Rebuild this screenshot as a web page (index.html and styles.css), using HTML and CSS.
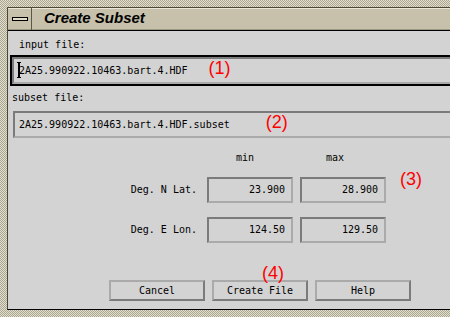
FILE: index.html
```html
<!DOCTYPE html>
<html lang="en">
<head>
  <meta charset="UTF-8">
  <title>Create Subset</title>
  <link rel="stylesheet" href="styles.css">
</head>
<body>
  <div class="window">
    <div class="frame">
      <!-- ===== Title bar ===== -->
      <div class="titlebar">
        <div class="menu-btn"><span class="bar"></span></div>
        <div class="title">Create Subset</div>
      </div>

      <div class="content">
        <div class="label label-input">input file:</div>
        <div class="focus-ring">
          <div class="field input"><svg class="caret" width="4" height="16" viewBox="0 0 4 16">
              <path d="M0 0.5H4M0 15.5H4" stroke="#000" stroke-width="1"/>
              <rect x="1" y="0" width="2" height="16" fill="#000"/>
            </svg>2A25.990922.10463.bart.4.HDF<span class="note note-1">(1)</span></div>
        </div>

        <div class="label label-subset">subset file:</div>
        <div class="field subset">2A25.990922.10463.bart.4.HDF.subset<span class="note note-2">(2)</span></div>

        <div class="range">
          <div></div>
          <div class="head head-min">min</div>
          <div class="head head-max">max</div>

          <div class="row-label">Deg. N Lat.</div>
          <div class="num">23.900</div>
          <div class="num">28.900</div>

          <div class="row-label">Deg. E Lon.</div>
          <div class="num">124.50</div>
          <div class="num">129.50</div>
        </div>

        <div class="buttons">
          <div class="btn">Cancel</div>
          <div class="btn">Create File</div>
          <div class="btn">Help</div>
        </div>

        <!-- annotations drawn over the dialog -->
        <div class="note note-3">(3)</div>
        <div class="note note-4">(4)</div>
      </div>
    </div>
  </div>
</body>
</html>
```

FILE: styles.css
```css
body {
  margin: 0;
  background-color: #d3d3d3;
  font-family: "DejaVu Sans Mono", monospace;
  font-size: 10px;
  color: #000;
}
.window {
  width: 450px;
  height: 317px;
  box-sizing: border-box;
  padding: 7px 0 7px 7px;
  background: repeating-conic-gradient(#e2ded0 0 25%, #aba690 0 50%) 0 0 / 2px 2px;
  overflow: hidden;
}
.frame {
  box-sizing: border-box;
  height: 303px;
  border-left: 1px solid #4b4838;
  border-top: 1px solid #4b4838;
  border-bottom: 1px solid #000;
  background-color: #d3d3d3;
}
.titlebar {
  display: flex;
  height: 22px;
  background-color: #c7c1ab;
  border-bottom: 1px solid #000;
  box-shadow: inset 0 1px #ebe7d8, inset 0 -1px #9c977f;
}
.menu-btn {
  width: 23px;
  border-right: 1px solid #5a5748;
  display: flex;
  align-items: center;
  justify-content: center;
}
.bar {
  width: 14px;
  height: 2px;
  border: 1px solid #000;
  background-color: #e2ddc9;
}
.title {
  padding-left: 12px;
  font: italic bold 15px "Liberation Sans", sans-serif;
  line-height: 20px;
}
.content {
  position: relative;
  height: 278px;
}
.label {
  line-height: 13px;
  color: #000;
}
.label-input {
  margin: 7px 0 0 11px;
}
.label-subset {
  margin: 5px 0 0 4px;
}
.focus-ring {
  margin: 4px -20px 0 2px;
  border: 2px solid #000;
}
.field {
  white-space: nowrap;
  line-height: 23px;
  height: 23px;
  border: 2px solid;
  border-color: #7b7b7b #aaa #aaa #7b7b7b;
}
.input {
  padding-left: 3px;
}
.caret {
  vertical-align: top;
  margin: 3px -2px 0 0;
}
.subset {
  margin: 7px -20px 0 5px;
  padding-left: 4px;
}
.note {
  font-family: "Liberation Sans", sans-serif;
  font-size: 18px;
  line-height: 0;
  color: #f00;
}
.note-1 {
  margin-left: 21px;
}
.note-2 {
  margin-left: 36px;
}
.note-3,
.note-4 {
  position: absolute;
  line-height: 18px;
}
.note-3 {
  left: 392px;
  top: 132px;
}
.note-4 {
  left: 254px;
  top: 226px;
}
.range {
  display: grid;
  grid-template-columns: 192px 86px 86px;
  column-gap: 7px;
  row-gap: 14px;
  margin-top: 15px;
}
.head {
  line-height: 10px;
  height: 10px;
  color: #000;
}
.head-min {
  padding-left: 29px;
}
.head-max {
  padding-left: 26px;
}
.row-label {
  text-align: right;
  padding-right: 3px;
  line-height: 26px;
}
.num {
  height: 22px;
  line-height: 22px;
  text-align: right;
  padding-right: 6px;
  border: 2px solid;
  border-color: #7b7b7b #aaa #aaa #7b7b7b;
}
.buttons {
  display: flex;
  gap: 7px;
  margin: 37px 0 0 101px;
}
.btn {
  width: 92px;
  height: 17px;
  line-height: 17px;
  text-align: center;
  border: 2px solid;
  border-color: #aaa #7b7b7b #7b7b7b #aaa;
}
```
